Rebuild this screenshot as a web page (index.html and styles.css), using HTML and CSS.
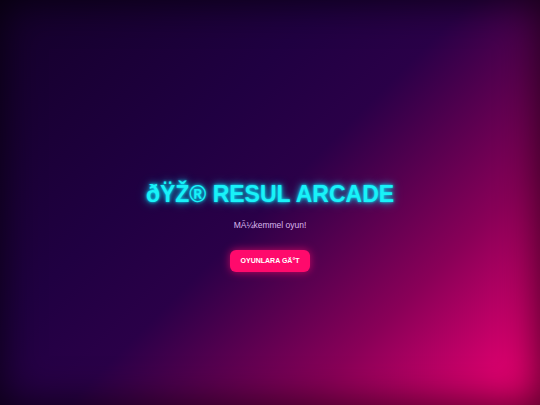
FILE: index.html
```html
<!DOCTYPE html>
<html>
<head>
<meta charset="utf-8">
<link rel="stylesheet" href="styles.css">
</head>
<body>
<div class="bg">
  <main class="hero">
    <h1 class="title">ðŸŽ® RESUL ARCADE</h1>
    <p class="sub">MÃ¼kemmel oyun!</p>
    <a class="btn">OYUNLARA GÄ°T</a>
  </main>
</div>
</body>
</html>
```
FILE: styles.css
```css
html, body {
  margin: 0;
  padding: 0;
  height: 100%;
}
body {
  font-family: "Liberation Sans", Arial, sans-serif;
  background: #1a0033;
}
.bg {
  height: 405px;
  background: linear-gradient(135deg, #14002a 0%, #200042 35%, #2a0048 50%, #8a0058 75%, #ff0077 100%);
  box-shadow: inset 0 0 40px rgba(0,0,0,0.75);
  display: flex;
  align-items: center;
  justify-content: center;
}
.hero {
  display: flex;
  flex-direction: column;
  align-items: center;
  padding-top: 48px;
}
.title {
  margin: 0;
  font-size: 23px;
  line-height: 26px;
  font-weight: bold;
  color: #19f2f8;
  text-shadow: 0 0 3px #00e8ff, 0 0 7px rgba(0,232,255,0.7), 0 0 12px rgba(0,232,255,0.35);
}
.sub {
  margin: 13px 0 0;
  font-size: 8.5px;
  line-height: 10px;
  color: #d9b8ec;
}
.btn {
  margin-top: 20px;
  background: #ff0a6c;
  color: #fff;
  font-size: 7px;
  line-height: 8px;
  font-weight: bold;
  padding: 7px 11px;
  border-radius: 6px;
  box-shadow: 0 0 8px rgba(255,10,108,0.7);
}
```
